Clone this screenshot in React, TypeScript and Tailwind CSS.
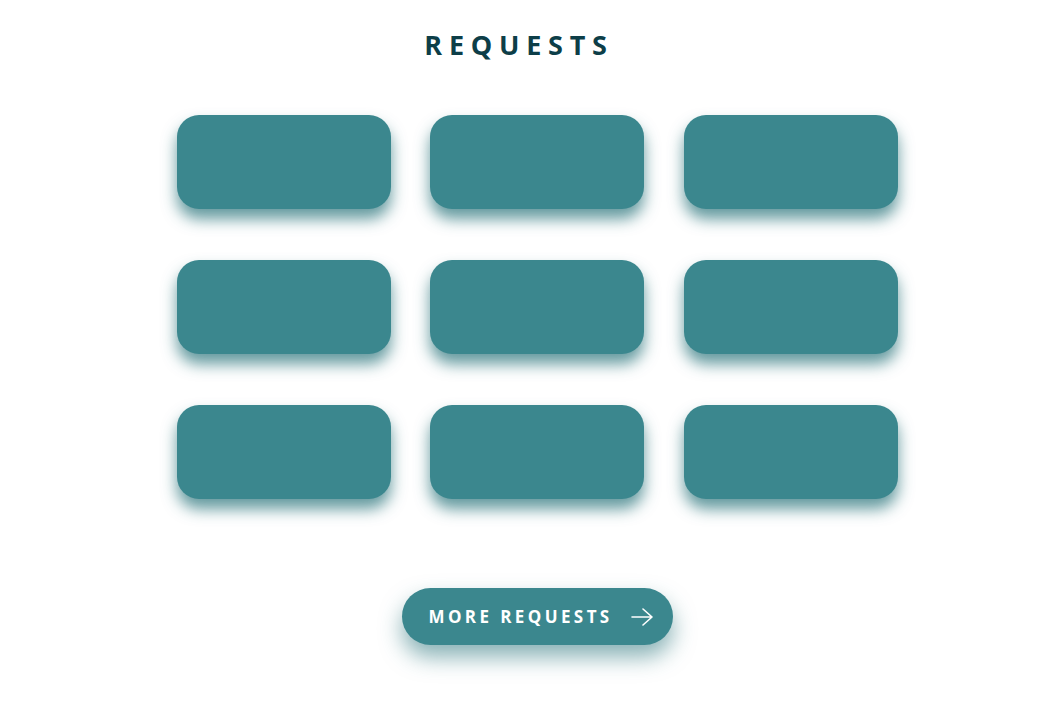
import React from "react";

function Card() {
  return (
    <div className="h-[94px] w-[214px] rounded-[22px] bg-[#3b878e] shadow-[0_10px_15px_rgba(40,115,122,0.72)]" />
  );
}

export default function App() {
  return (
    <div
      className="flex min-h-[705px] w-full flex-col items-center bg-white pl-[14px]"
      style={{ fontFamily: '"Open Sans", "Noto Sans", sans-serif' }}
    >
      <h1 className="mt-[26px] pr-[36px] text-[27px] font-bold leading-[38px] tracking-[0.25em] text-[#0d3e48]">
        REQUESTS
      </h1>
      <div className="mt-[51px] grid grid-cols-[214px_214px_214px] gap-x-[39.5px] gap-y-[51px]">
        {Array.from({ length: 9 }).map((_, i) => (
          <Card key={i} />
        ))}
      </div>
      <button className="mt-[89px] flex h-[57px] w-[271px] items-center rounded-full bg-[#3b878e] pl-[27px] shadow-[0_12px_22px_rgba(40,115,122,0.55)]">
        <span className="text-[17px] font-bold tracking-[0.2em] text-white">MORE REQUESTS</span>
        <svg width="22" height="20" viewBox="0 0 22 20" className="ml-[18px]" fill="none" stroke="white" strokeWidth="1.6" strokeLinecap="round" strokeLinejoin="round">
          <path d="M1 10h20M12 2l9 8-9 8" />
        </svg>
      </button>
    </div>
  );
}
